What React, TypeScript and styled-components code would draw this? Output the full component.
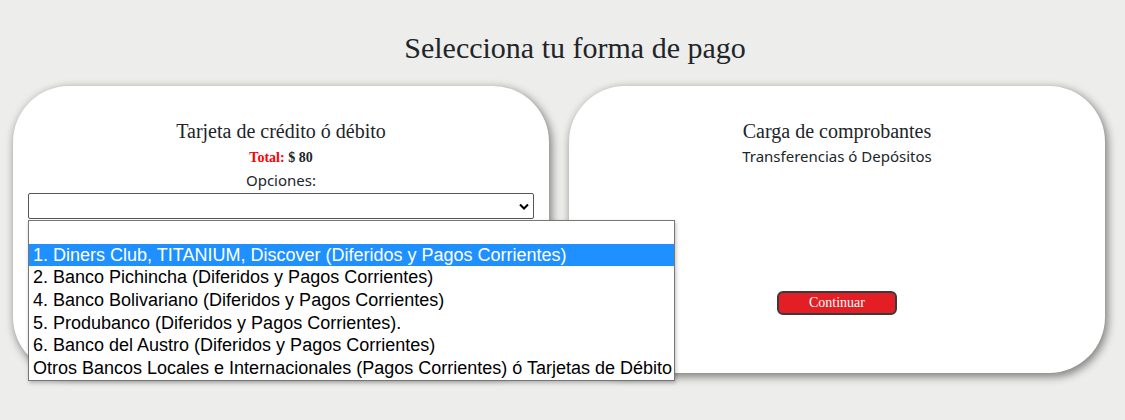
import React from "react";
import styled, { createGlobalStyle } from "styled-components";

const Global = createGlobalStyle`
  html, body { margin: 0; padding: 0; }
  body {
    background: #ededeb;
    font-family: "Noto Sans", "Open Sans", Arial, sans-serif;
    color: #212529;
    width: 1125px;
    height: 420px;
    overflow: hidden;
  }
`;

const Page = styled.div`
  display: flex;
  flex-direction: column;
  padding-top: 30px;
`;

const Heading = styled.h1`
  margin: 0 0 20px 25px;
  text-align: center;
  font-family: "Liberation Serif", "Times New Roman", serif;
  font-weight: 400;
  font-size: 30px;
  line-height: 36px;
  color: #212529;
`;

const Row = styled.div`
  display: flex;
  gap: 20px;
  padding: 0 20px 0 13px;
`;

const Card = styled.section`
  flex: 1;
  height: 287px;
  box-sizing: border-box;
  background: #fff;
  border-radius: 56px;
  box-shadow: 2px 3px 8px 1px rgba(0, 0, 0, 0.45);
  display: flex;
  flex-direction: column;
  align-items: center;
  padding: 33px 15px 0;
  position: relative;
`;

const CardTitle = styled.h2`
  margin: 0;
  font-family: "Liberation Serif", "Times New Roman", serif;
  font-weight: 400;
  font-size: 20px;
  line-height: 24px;
  color: #212529;
`;

const Total = styled.div`
  margin-top: 5px;
  font-family: "Liberation Serif", "Times New Roman", serif;
  font-weight: 700;
  font-size: 14px;
  line-height: 19px;
  color: #212529;
`;

const TotalLabel = styled.span`
  color: #ff0000;
`;

const Label = styled.div<{ $mt?: number }>`
  margin-top: ${(p) => p.$mt ?? 0}px;
  font-size: 15px;
  line-height: 20px;
  color: #212529;
`;

const SelectWrap = styled.div`
  position: relative;
  align-self: stretch;
  margin-top: 3px;
`;

const SelectBox = styled.div`
  height: 26px;
  box-sizing: border-box;
  border: 1px solid #555;
  border-radius: 2px;
  background: #fff;
  display: flex;
  align-items: center;
  justify-content: flex-end;
  padding-right: 4px;
`;

const List = styled.ul`
  position: absolute;
  top: 27px;
  left: 0;
  width: 647px;
  box-sizing: border-box;
  margin: 0;
  padding: 0;
  list-style: none;
  background: #fff;
  border: 1px solid #767676;
  box-shadow: 1px 2px 4px rgba(0, 0, 0, 0.25);
  z-index: 2;
`;

const Option = styled.li<{ $active?: boolean }>`
  height: 22.7px;
  line-height: 22.7px;
  padding: 0 4px;
  font-family: "Liberation Sans", Arial, sans-serif;
  font-size: 18px;
  white-space: nowrap;
  color: ${(p) => (p.$active ? "#fff" : "#000")};
  background: ${(p) => (p.$active ? "#1e90ff" : "transparent")};
`;

const Button = styled.button`
  margin-top: 125px;
  width: 120px;
  height: 24px;
  box-sizing: border-box;
  border: 2px solid #3a3a3a;
  border-radius: 6px;
  background: #e31e25;
  color: #fff;
  font-family: "Liberation Serif", "Times New Roman", serif;
  font-size: 14px;
  padding: 0;
`;

const options = [
  "",
  "1. Diners Club, TITANIUM, Discover (Diferidos y Pagos Corrientes)",
  "2. Banco Pichincha (Diferidos y Pagos Corrientes)",
  "4. Banco Bolivariano (Diferidos y Pagos Corrientes)",
  "5. Produbanco (Diferidos y Pagos Corrientes).",
  "6. Banco del Austro (Diferidos y Pagos Corrientes)",
  "Otros Bancos Locales e Internacionales (Pagos Corrientes) ó Tarjetas de Débito",
];

export default function App() {
  return (
    <>
      <Global />
      <Page>
        <Heading>Selecciona tu forma de pago</Heading>
        <Row>
          <Card>
            <CardTitle>Tarjeta de crédito ó débito</CardTitle>
            <Total>
              <TotalLabel>Total:</TotalLabel> $ 80
            </Total>
            <Label $mt={3}>Opciones:</Label>
            <SelectWrap>
              <SelectBox>
                <svg width="10" height="7" viewBox="0 0 10 7">
                  <path d="M1 1.5 L5 5.5 L9 1.5" fill="none" stroke="#000" strokeWidth="2" />
                </svg>
              </SelectBox>
              <List>
                {options.map((o, i) => (
                  <Option key={i} $active={i === 1}>
                    {o}
                  </Option>
                ))}
              </List>
            </SelectWrap>
          </Card>
          <Card>
            <CardTitle>Carga de comprobantes</CardTitle>
            <Label $mt={3}>Transferencias ó Depósitos</Label>
            <Button>Continuar</Button>
          </Card>
        </Row>
      </Page>
    </>
  );
}
